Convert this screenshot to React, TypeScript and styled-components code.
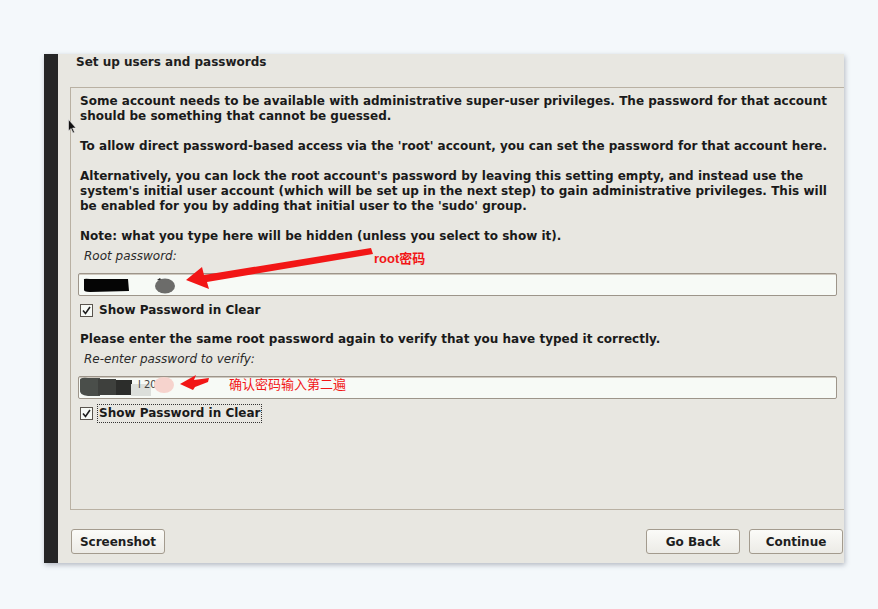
import React from 'react'
import styled, { createGlobalStyle } from 'styled-components'

const GlobalStyle = createGlobalStyle`
  html, body {
    margin: 0;
    padding: 0;
    background: #f4f8fb;
  }
  body {
    font-family: "DejaVu Sans", "Noto Sans", sans-serif;
  }
`

const Page = styled.div`
  position: relative;
  width: 878px;
  height: 609px;
  padding: 54px 0 0 44px;
  box-sizing: border-box;
  overflow: hidden;
`

const Window = styled.div`
  display: flex;
  width: 800px;
  height: 509px;
  background: #e8e7e1;
  box-shadow: 1px 2px 5px rgba(60, 70, 90, 0.35);
  overflow: hidden;
`

const SideBar = styled.div`
  width: 14px;
  flex: none;
  background: #262626;
`

const Main = styled.div`
  flex: 1;
  display: flex;
  flex-direction: column;
  min-width: 0;
`

const Title = styled.div`
  font-size: 12px;
  font-weight: bold;
  line-height: 15px;
  color: #1e1e1e;
  padding: 1px 0 0 18px;
`

const Panel = styled.div`
  margin: 17px -4px 0 12px;
  height: 423px;
  box-sizing: border-box;
  border: 1px solid #b9b1a3;
  padding: 6px 0 0 9px;
`

const Para = styled.p`
  margin: 0 0 15px;
  font-size: 12px;
  font-weight: bold;
  line-height: 15px;
  letter-spacing: 0.02px;
  color: #1a1a1a;
  white-space: nowrap;
`

const FieldLabel = styled.div<{ $gap: number }>`
  margin-top: ${p => p.$gap}px;
  padding-left: 4px;
  font-size: 12px;
  font-style: italic;
  line-height: 15px;
  color: #2a2a2a;
`

const Field = styled.div<{ $gap: number }>`
  position: relative;
  margin: ${p => p.$gap}px 0 0 -2px;
  width: 759px;
  height: 23px;
  box-sizing: border-box;
  background: #f7faf6;
  border: 1px solid #9d958a;
  border-radius: 2px;
  box-shadow: inset 0 1px 0 #cfc9bf;
  overflow: hidden;
`

const CheckRow = styled.div<{ $gap: number }>`
  display: flex;
  align-items: center;
  gap: 6px;
  margin-top: ${p => p.$gap}px;
  height: 18px;
`

const Box = styled.span`
  width: 11px;
  height: 11px;
  border: 1px solid #5a554e;
  background: #f7faf6;
  display: flex;
  align-items: center;
  justify-content: center;
`

const CheckText = styled.span<{ $focused?: boolean }>`
  font-size: 12px;
  font-weight: bold;
  line-height: 15px;
  color: #1a1a1a;
  padding: 1px 1px;
  margin-left: -1px;
  outline: ${p => (p.$focused ? '1px dotted #333' : 'none')};
`

const Question = styled(Para)<{ $gap: number }>`
  margin: ${p => p.$gap}px 0 0;
`

const Buttons = styled.div`
  display: flex;
  align-items: center;
  gap: 9px;
  margin: 19px 1px 0 13px;
`

const Spacer = styled.div`
  flex: 1;
`

const Button = styled.button`
  width: 94px;
  height: 25px;
  box-sizing: border-box;
  border: 1px solid #a39b8e;
  border-radius: 3px;
  background: linear-gradient(#fbfbf8, #ecebe6);
  font-family: "DejaVu Sans", sans-serif;
  font-size: 12px;
  font-weight: bold;
  color: #1e1e1e;
  padding: 0;
`

const Overlay = styled.svg`
  position: absolute;
  left: 0;
  top: 0;
  pointer-events: none;
`

const Note = styled.span<{ $x: number; $y: number; $bold?: boolean }>`
  position: absolute;
  left: ${p => p.$x}px;
  top: ${p => p.$y}px;
  color: #f21616;
  font-family: "Liberation Sans", "Noto Sans CJK SC", sans-serif;
  font-size: 13px;
  font-weight: ${p => (p.$bold ? 'bold' : 'normal')};
  line-height: 16px;
  white-space: nowrap;
`

const Check = () => (
  <Box>
    <svg width="9" height="9" viewBox="0 0 9 9">
      <path d="M1 4.5 L3.5 7.5 L8 1" fill="none" stroke="#1e1e1e" strokeWidth="1.6" />
    </svg>
  </Box>
)

export default function App() {
  return (
    <>
      <GlobalStyle />
      <Page>
        <Window>
          <SideBar />
          <Main>
            <Title>Set up users and passwords</Title>
            <Panel>
              <Para>
                Some account needs to be available with administrative super-user privileges. The password for that account
                <br />
                should be something that cannot be guessed.
              </Para>
              <Para>To allow direct password-based access via the 'root' account, you can set the password for that account here.</Para>
              <Para>
                Alternatively, you can lock the root account's password by leaving this setting empty, and instead use the
                <br />
                system's initial user account (which will be set up in the next step) to gain administrative privileges. This will
                <br />
                be enabled for you by adding that initial user to the 'sudo' group.
              </Para>
              <Para style={{ marginBottom: 0 }}>Note: what you type here will be hidden (unless you select to show it).</Para>
              <FieldLabel $gap={5}>Root password:</FieldLabel>
              <Field $gap={9} />
              <CheckRow $gap={5}>
                <Check />
                <CheckText>Show Password in Clear</CheckText>
              </CheckRow>
              <Question $gap={13}>Please enter the same root password again to verify that you have typed it correctly.</Question>
              <FieldLabel $gap={5}>Re-enter password to verify:</FieldLabel>
              <Field $gap={9} />
              <CheckRow $gap={5}>
                <Check />
                <CheckText $focused>Show Password in Clear</CheckText>
              </CheckRow>
            </Panel>
            <Buttons>
              <Button>Screenshot</Button>
              <Spacer />
              <Button>Go Back</Button>
              <Button>Continue</Button>
            </Buttons>
          </Main>
        </Window>

        <Overlay width="878" height="609" viewBox="0 0 878 609">
          {/* redactions, first field */}
          <path d="M84 280 Q83 278 90 279 L128 279 L129 291 L90 292 Q83 292 84 289 Z" fill="#050505" />
          <path d="M157 280 L160 278 L162 281 Z" fill="#222" />
          <ellipse cx="165" cy="286" rx="10" ry="7.5" fill="#6c6c6a" />
          {/* redactions, second field */}
          <path d="M80 381 Q79 377 88 378 L100 378 L100 396 L88 396 Q79 395 80 390 Z" fill="#4a4e4a" />
          <rect x="98" y="379" width="18" height="16" fill="#3e403d" />
          <rect x="116" y="380" width="16" height="15" fill="#2c2d2b" />
          <rect x="131" y="384" width="20" height="12" fill="#dcdfdb" />
          <text x="138" y="388" fontSize="10" fill="#444" fontFamily="DejaVu Sans">l 20</text>
          <ellipse cx="164" cy="385" rx="10" ry="8" fill="#f6d3cd" />
          {/* arrow one */}
          <path d="M371 248 L373 254 L207 282 L209 289 L186 280 L202 267 L204 275 Z" fill="#f21616" />
          {/* arrow two */}
          <path d="M180 384 L196 375 L194 380 L209 378 L208 382 L195 387 L193 390 Z" fill="#f21616" />
          {/* mouse pointer */}
          <path d="M68.5 119.5 L68.5 131 L71 128.5 L73 133 L74.5 132.3 L72.6 128 L76 128 Z" fill="#111" stroke="#eee" strokeWidth="0.6" />
        </Overlay>
        <Note $x={374} $y={251} $bold>root密码</Note>
        <Note $x={229} $y={377}>确认密码输入第二遍</Note>
      </Page>
    </>
  )
}
